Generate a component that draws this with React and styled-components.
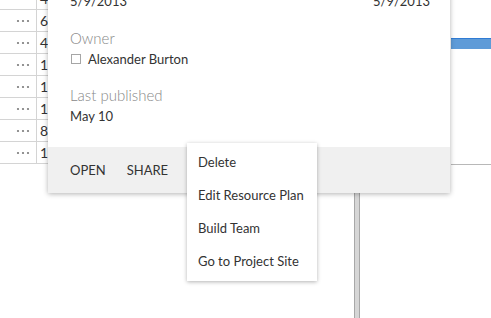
import styled, { createGlobalStyle } from 'styled-components';

const GlobalStyle = createGlobalStyle`
  html, body {
    margin: 0;
    padding: 0;
    background: #ffffff;
    overflow: hidden;
  }
  body {
    font-family: Lato, 'Open Sans', sans-serif;
    color: #333333;
  }
`;

const rows = ['4', '6', '4', '1', '1', '1', '8', '1'];

const menuItems = ['Delete', 'Edit Resource Plan', 'Build Team', 'Go to Project Site'];

const Dots = () => (
  <svg width="14" height="4" viewBox="0 0 14 4">
    <circle cx="2" cy="2" r="1.1" fill="#7a7a7a" />
    <circle cx="7" cy="2" r="1.1" fill="#7a7a7a" />
    <circle cx="12" cy="2" r="1.1" fill="#7a7a7a" />
  </svg>
);

const App = () => {
  return (
    <Page>
      <GlobalStyle />
      <Table>
        {rows.map((n, i) => (
          <Row key={i}>
            <DotsCell>
              <Dots />
            </DotsCell>
            <NumCell>{n}</NumCell>
          </Row>
        ))}
      </Table>

      <Gantt>
        <TaskBar />
        <GridLine />
        <Connector />
      </Gantt>

      <Card>
        <CardBody>
          <DateRow>
            <span>5/9/2013</span>
            <span>5/9/2013</span>
          </DateRow>
          <Label>Owner</Label>
          <Owner>
            <Check />
            Alexander Burton
          </Owner>
          <Label $gap>Last published</Label>
          <Value>May 10</Value>
        </CardBody>
        <Footer>
          <FooterButton>OPEN</FooterButton>
          <FooterButton>SHARE</FooterButton>
        </Footer>
      </Card>

      <Menu>
        {menuItems.map((item) => (
          <MenuItem key={item}>{item}</MenuItem>
        ))}
      </Menu>
    </Page>
  );
};

export default App;

const Page = styled.div`
  position: relative;
  width: 491px;
  height: 318px;
  overflow: hidden;
`;

const Table = styled.div`
  width: 240px;
  margin-top: -12px;
`;

const Row = styled.div`
  display: flex;
  height: 21px;
  border-bottom: 1px solid #d4d4d4;
`;

const DotsCell = styled.div`
  width: 37px;
  display: flex;
  align-items: center;
  justify-content: flex-end;
  padding-right: 6px;
  box-sizing: border-box;
  border-right: 1px solid #d4d4d4;
`;

const NumCell = styled.div`
  flex: 1;
  padding-left: 3px;
  font-size: 14px;
  line-height: 21px;
  color: #333;
`;

const Gantt = styled.div`
  position: absolute;
  inset: 0;
  pointer-events: none;
`;

const TaskBar = styled.div`
  position: absolute;
  left: 451px;
  right: 0;
  top: 38px;
  height: 11px;
  background: #5e9bd8;
  border-top: 1px solid #2f7bd4;
  box-sizing: border-box;
`;

const GridLine = styled.div`
  position: absolute;
  left: 451px;
  right: 0;
  top: 164px;
  border-top: 1px solid #b8b8b8;
`;

const Connector = styled.div`
  position: absolute;
  left: 354px;
  top: 190px;
  bottom: 0;
  width: 6px;
  box-sizing: border-box;
  background: #d6d6d6;
  border-left: 1px solid #a8a8a8;
  border-right: 1px solid #a8a8a8;
`;

const Card = styled.div`
  position: absolute;
  left: 48px;
  top: -20px;
  width: 402px;
  height: 213px;
  display: flex;
  flex-direction: column;
  background: #ffffff;
  box-shadow: 0 1px 5px rgba(0, 0, 0, 0.3);
`;

const CardBody = styled.div`
  flex: 1;
  padding: 12px 20px 0 22px;
`;

const DateRow = styled.div`
  display: flex;
  justify-content: space-between;
  font-size: 13px;
  line-height: 18px;
  color: #333;
`;

const Label = styled.div`
  margin-top: ${(p) => (p.$gap ? '17px' : '18px')};
  font-size: 15px;
  font-weight: 300;
  line-height: 20px;
  color: #888888;
`;

const Owner = styled.div`
  margin-top: 2px;
  display: flex;
  align-items: center;
  gap: 7px;
  font-size: 13px;
  line-height: 18px;
  color: #333;
`;

const Check = styled.span`
  width: 8px;
  height: 8px;
  margin-left: 1px;
  border: 1px solid #a6a6a6;
`;

const Value = styled.div`
  margin-top: 2px;
  font-size: 13px;
  line-height: 18px;
  color: #333;
`;

const Footer = styled.div`
  height: 46px;
  display: flex;
  align-items: center;
  gap: 21px;
  padding-left: 22px;
  background: #f0f0f0;
`;

const FooterButton = styled.span`
  font-size: 13px;
  color: #333;
`;

const Menu = styled.div`
  position: absolute;
  left: 187px;
  top: 143px;
  width: 130px;
  padding: 3px 0;
  background: #ffffff;
  box-shadow: 0 1px 4px rgba(0, 0, 0, 0.3);
`;

const MenuItem = styled.div`
  height: 33px;
  line-height: 33px;
  padding-left: 11px;
  font-size: 13px;
  color: #333;
  white-space: nowrap;
`;
